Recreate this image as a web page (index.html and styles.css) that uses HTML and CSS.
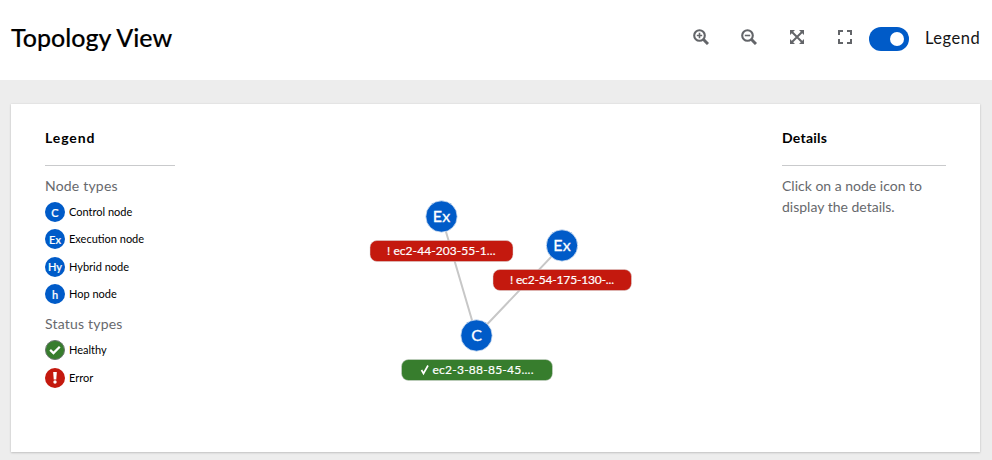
FILE: index.html
```html
<!DOCTYPE html>
<html lang="en">
<head>
<meta charset="utf-8">
<title>Topology View</title>
<link rel="stylesheet" href="styles.css">
</head>
<body>
<header class="header">
  <h1 class="title">Topology View</h1>
  <div class="toolbar">
    <button class="tool" aria-label="Zoom in"><svg viewBox="0 0 16 16"><circle cx="6.5" cy="6.5" r="5.3"/><path class="sign" d="M6.5 3.800v5.400M3.800 6.500h5.400"/><path class="handle" d="M10.500 10.500l4.500 4.500"/></svg></button>
    <button class="tool" aria-label="Zoom out"><svg viewBox="0 0 16 16"><circle cx="6.5" cy="6.5" r="5.3"/><path class="sign" d="M3.800 6.500h5.400"/><path class="handle" d="M10.500 10.500l4.500 4.500"/></svg></button>
    <button class="tool" aria-label="Fit to screen"><svg viewBox="0 0 16 16"><path class="arms" d="M3 3l10 10M13 3L3 13"/><path class="solid" d="M1 1h5L1 6zM15 1v5l-5-5zM1 15v-5l5 5zM15 15h-5l5-5z"/></svg></button>
    <button class="tool" aria-label="Reset zoom"><svg viewBox="0 0 16 16"><path class="corners" d="M2 6V2h4M10 2h4v4M14 10v4h-4M6 14H2v-4"/></svg></button>
    <span class="switch"></span>
    <span class="switch-label">Legend</span>
  </div>
</header>
<main class="card">
  <section class="legend">
    <h2 class="heading wide">Legend</h2>
    <h3 class="group">Node types</h3>
    <ul class="items">
      <li><span class="dot">C</span><span class="name">Control node</span></li>
      <li><span class="dot">Ex</span><span class="name">Execution node</span></li>
      <li><span class="dot">Hy</span><span class="name">Hybrid node</span></li>
      <li><span class="dot">h</span><span class="name">Hop node</span></li>
    </ul>
    <h3 class="group status">Status types</h3>
    <ul class="items">
      <li><span class="dot healthy"><svg viewBox="0 0 20 20"><path d="M4.6 9.8l3.7 3.6 7-7"/></svg></span><span class="name">Healthy</span></li>
      <li><span class="dot error"><svg viewBox="0 0 20 20"><path class="solid" d="M8.2 4h3.6l-.5 7.4H8.7z"/><circle class="solid" cx="10" cy="14" r="1.7"/></svg></span><span class="name">Error</span></li>
    </ul>
  </section>
  <svg class="graph" viewBox="175 104 607 348">
    <path class="link" d="M441.500 216.500L476.500 335.500M562 245.500L476.500 335.500"/>
    <g class="node">
      <circle cx="441.500" cy="216.500" r="15.700"/><text x="441.500" y="222" textLength="17.500">Ex</text>
      <circle cx="562" cy="245.500" r="15.700"/><text x="562" y="251" textLength="17.500">Ex</text>
      <circle cx="476.500" cy="335.500" r="15.700"/><text x="476.500" y="341">C</text>
    </g>
    <g class="tag">
      <rect x="370" y="240.500" width="143" height="21" rx="7"/><text x="387" y="255.300" textLength="108.500">! ec2-44-203-55-1...</text>
      <rect x="493" y="269.500" width="138.500" height="21" rx="7"/><text x="510" y="284.300" textLength="104">! ec2-54-175-130-...</text>
      <rect class="ok" x="401.500" y="359.500" width="151" height="21" rx="7"/><path class="tick" d="M421.500 370l2 3.500 4.500-8"/><text x="432.500" y="374.300" textLength="101">ec2-3-88-85-45....</text>
    </g>
  </svg>
  <section class="details">
    <h2 class="heading">Details</h2>
    <p class="hint">Click on a node icon to<br>display the details.</p>
  </section>
</main>
</body>
</html>
```
FILE: styles.css
```css
* { box-sizing: border-box; }
body {
  margin: 0;
  height: 460px;
  overflow: hidden;
  background: #ededed;
  color: #151515;
  font-family: Lato, "Liberation Sans", sans-serif;
}
h1, h2, h3, p, ul { margin: 0; padding: 0; }
.header {
  display: flex;
  justify-content: space-between;
  height: 80px;
  padding: 0 12px 0 11px;
  background: #fff;
}
.title {
  margin-top: 21px;
  font-size: 25px;
  font-weight: 500;
  line-height: 32px;
  letter-spacing: 0;
  color: #000;
  -webkit-text-stroke: .15px #000;
}
.toolbar { display: flex; height: 78px; align-items: center; }
.tool {
  width: 16px;
  height: 16px;
  margin: -4px 32px 0 0;
  padding: 0;
  border: 0;
  background: none;
}
.tool:nth-of-type(4) { margin-right: 16px; }
svg { display: block; }
.tool svg { width: 16px; height: 16px; fill: none; stroke: #636569; stroke-width: 2.1; }
.tool .sign { stroke-width: 1.6; }
.tool .handle { stroke-width: 3; }
.tool .arms { stroke-width: 2; }
.tool .solid { fill: #636569; stroke: none; }
.tool .corners { stroke-width: 2; }
.switch {
  display: flex;
  align-items: center;
  justify-content: flex-end;
  width: 40px;
  height: 24px;
  padding-right: 5px;
  border-radius: 12px;
  background: #005bc8;
}
.switch::after { content: ""; width: 14px; height: 14px; border-radius: 50%; background: #fff; }
.switch-label { width: 55px; margin: -3px 0 0 16px; font-size: 16.5px; letter-spacing: .5px; white-space: nowrap; }
.card {
  display: flex;
  width: 969px;
  height: 348px;
  margin: 24px 0 0 11px;
  background: #fff;
  box-shadow: 0 1px 2px rgba(0,0,0,.16), 0 0 2px rgba(0,0,0,.08);
}
.legend { width: 164px; padding: 23px 0 0 34px; }
.heading {
  height: 39px;
  border-bottom: 1px solid #c9cacc;
  font-size: 14px;
  font-weight: 700;
  line-height: 21px;
  letter-spacing: .25px;
  color: #000;
}
.wide { letter-spacing: .9px; }
.group { margin-top: 9px; font-size: 14px; font-weight: 400; line-height: 21px; letter-spacing: .2px; color: #67696d; }
.items { list-style: none; }
.items li { display: flex; align-items: center; height: 20px; margin-top: 7.4px; font-size: 11px; white-space: nowrap; }
.items li:first-child { margin-top: 6px; }
.name { margin-top: -1px; color: #000; }
.status { margin-top: 9px; }
.dot {
  display: flex;
  align-items: center;
  justify-content: center;
  width: 20px;
  height: 20px;
  margin-right: 4px;
  border-radius: 50%;
  background: #005bc8;
  color: #fff;
  font-weight: 500;
  -webkit-text-stroke: .2px #fff;
}
.dot svg { width: 20px; height: 20px; fill: none; stroke: #fff; stroke-width: 2.5; }
.dot .solid { fill: #fff; stroke: none; }
.healthy { background: #377d2d; border: 1px solid #6c7770; }
.error { background: #c4190e; }
.graph { width: 607px; height: 348px; }
.link { stroke: #c7c7c7; stroke-width: 2; }
.node circle { fill: #005bc8; stroke: #dce6f2; stroke-width: .8; }
.node text { fill: #fff; font-size: 16px; text-anchor: middle; stroke: #fff; stroke-width: .3; }
.tag rect { fill: #c4190e; stroke: #d9d9d9; stroke-width: .5; }
.tag .ok { fill: #377d2d; }
.tag text { fill: #fff; font-size: 12px; stroke: #fff; stroke-width: .2; }
.tag .tick { fill: none; stroke: #fff; stroke-width: 1.7; }
.details { width: 164px; padding-top: 23px; }
.hint { margin-top: 9px; font-size: 14px; line-height: 21px; letter-spacing: 0; color: #67696d; white-space: nowrap; }
```
